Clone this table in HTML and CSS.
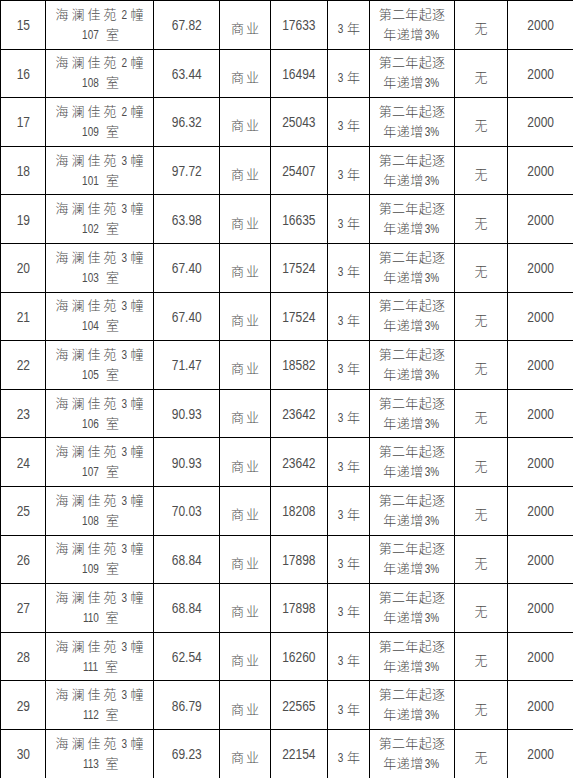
FILE: index.html
```html
<!DOCTYPE html>
<html lang="zh">
<head>
<meta charset="utf-8">
<title>房屋租赁一览</title>
<link rel="stylesheet" href="styles.css">
</head>
<body>
<table class="grid">
<colgroup>
<col class="c-no"><col class="c-name"><col class="c-area"><col class="c-use"><col class="c-rent"><col class="c-term"><col class="c-rise"><col class="c-none"><col class="c-dep">
</colgroup>
<tbody>
<tr><td class="num"><span class="n">15</span></td><td class="name"><div class="l1">海澜佳苑<span class="d">2</span>幢</div><div class="l2"><span class="d">107</span>室</div></td><td class="num"><span class="n">67.82</span></td><td class="cjk use">商业</td><td class="num"><span class="n">17633</span></td><td class="term"><span class="d">3</span>年</td><td class="rise"><div class="r1">第二年起逐</div><div class="r2">年递增<span class="d">3%</span></div></td><td class="cjk">无</td><td class="num"><span class="n">2000</span></td></tr>
<tr><td class="num"><span class="n">16</span></td><td class="name"><div class="l1">海澜佳苑<span class="d">2</span>幢</div><div class="l2"><span class="d">108</span>室</div></td><td class="num"><span class="n">63.44</span></td><td class="cjk use">商业</td><td class="num"><span class="n">16494</span></td><td class="term"><span class="d">3</span>年</td><td class="rise"><div class="r1">第二年起逐</div><div class="r2">年递增<span class="d">3%</span></div></td><td class="cjk">无</td><td class="num"><span class="n">2000</span></td></tr>
<tr><td class="num"><span class="n">17</span></td><td class="name"><div class="l1">海澜佳苑<span class="d">2</span>幢</div><div class="l2"><span class="d">109</span>室</div></td><td class="num"><span class="n">96.32</span></td><td class="cjk use">商业</td><td class="num"><span class="n">25043</span></td><td class="term"><span class="d">3</span>年</td><td class="rise"><div class="r1">第二年起逐</div><div class="r2">年递增<span class="d">3%</span></div></td><td class="cjk">无</td><td class="num"><span class="n">2000</span></td></tr>
<tr><td class="num"><span class="n">18</span></td><td class="name"><div class="l1">海澜佳苑<span class="d">3</span>幢</div><div class="l2"><span class="d">101</span>室</div></td><td class="num"><span class="n">97.72</span></td><td class="cjk use">商业</td><td class="num"><span class="n">25407</span></td><td class="term"><span class="d">3</span>年</td><td class="rise"><div class="r1">第二年起逐</div><div class="r2">年递增<span class="d">3%</span></div></td><td class="cjk">无</td><td class="num"><span class="n">2000</span></td></tr>
<tr><td class="num"><span class="n">19</span></td><td class="name"><div class="l1">海澜佳苑<span class="d">3</span>幢</div><div class="l2"><span class="d">102</span>室</div></td><td class="num"><span class="n">63.98</span></td><td class="cjk use">商业</td><td class="num"><span class="n">16635</span></td><td class="term"><span class="d">3</span>年</td><td class="rise"><div class="r1">第二年起逐</div><div class="r2">年递增<span class="d">3%</span></div></td><td class="cjk">无</td><td class="num"><span class="n">2000</span></td></tr>
<tr><td class="num"><span class="n">20</span></td><td class="name"><div class="l1">海澜佳苑<span class="d">3</span>幢</div><div class="l2"><span class="d">103</span>室</div></td><td class="num"><span class="n">67.40</span></td><td class="cjk use">商业</td><td class="num"><span class="n">17524</span></td><td class="term"><span class="d">3</span>年</td><td class="rise"><div class="r1">第二年起逐</div><div class="r2">年递增<span class="d">3%</span></div></td><td class="cjk">无</td><td class="num"><span class="n">2000</span></td></tr>
<tr><td class="num"><span class="n">21</span></td><td class="name"><div class="l1">海澜佳苑<span class="d">3</span>幢</div><div class="l2"><span class="d">104</span>室</div></td><td class="num"><span class="n">67.40</span></td><td class="cjk use">商业</td><td class="num"><span class="n">17524</span></td><td class="term"><span class="d">3</span>年</td><td class="rise"><div class="r1">第二年起逐</div><div class="r2">年递增<span class="d">3%</span></div></td><td class="cjk">无</td><td class="num"><span class="n">2000</span></td></tr>
<tr><td class="num"><span class="n">22</span></td><td class="name"><div class="l1">海澜佳苑<span class="d">3</span>幢</div><div class="l2"><span class="d">105</span>室</div></td><td class="num"><span class="n">71.47</span></td><td class="cjk use">商业</td><td class="num"><span class="n">18582</span></td><td class="term"><span class="d">3</span>年</td><td class="rise"><div class="r1">第二年起逐</div><div class="r2">年递增<span class="d">3%</span></div></td><td class="cjk">无</td><td class="num"><span class="n">2000</span></td></tr>
<tr><td class="num"><span class="n">23</span></td><td class="name"><div class="l1">海澜佳苑<span class="d">3</span>幢</div><div class="l2"><span class="d">106</span>室</div></td><td class="num"><span class="n">90.93</span></td><td class="cjk use">商业</td><td class="num"><span class="n">23642</span></td><td class="term"><span class="d">3</span>年</td><td class="rise"><div class="r1">第二年起逐</div><div class="r2">年递增<span class="d">3%</span></div></td><td class="cjk">无</td><td class="num"><span class="n">2000</span></td></tr>
<tr><td class="num"><span class="n">24</span></td><td class="name"><div class="l1">海澜佳苑<span class="d">3</span>幢</div><div class="l2"><span class="d">107</span>室</div></td><td class="num"><span class="n">90.93</span></td><td class="cjk use">商业</td><td class="num"><span class="n">23642</span></td><td class="term"><span class="d">3</span>年</td><td class="rise"><div class="r1">第二年起逐</div><div class="r2">年递增<span class="d">3%</span></div></td><td class="cjk">无</td><td class="num"><span class="n">2000</span></td></tr>
<tr><td class="num"><span class="n">25</span></td><td class="name"><div class="l1">海澜佳苑<span class="d">3</span>幢</div><div class="l2"><span class="d">108</span>室</div></td><td class="num"><span class="n">70.03</span></td><td class="cjk use">商业</td><td class="num"><span class="n">18208</span></td><td class="term"><span class="d">3</span>年</td><td class="rise"><div class="r1">第二年起逐</div><div class="r2">年递增<span class="d">3%</span></div></td><td class="cjk">无</td><td class="num"><span class="n">2000</span></td></tr>
<tr><td class="num"><span class="n">26</span></td><td class="name"><div class="l1">海澜佳苑<span class="d">3</span>幢</div><div class="l2"><span class="d">109</span>室</div></td><td class="num"><span class="n">68.84</span></td><td class="cjk use">商业</td><td class="num"><span class="n">17898</span></td><td class="term"><span class="d">3</span>年</td><td class="rise"><div class="r1">第二年起逐</div><div class="r2">年递增<span class="d">3%</span></div></td><td class="cjk">无</td><td class="num"><span class="n">2000</span></td></tr>
<tr><td class="num"><span class="n">27</span></td><td class="name"><div class="l1">海澜佳苑<span class="d">3</span>幢</div><div class="l2"><span class="d">110</span>室</div></td><td class="num"><span class="n">68.84</span></td><td class="cjk use">商业</td><td class="num"><span class="n">17898</span></td><td class="term"><span class="d">3</span>年</td><td class="rise"><div class="r1">第二年起逐</div><div class="r2">年递增<span class="d">3%</span></div></td><td class="cjk">无</td><td class="num"><span class="n">2000</span></td></tr>
<tr><td class="num"><span class="n">28</span></td><td class="name"><div class="l1">海澜佳苑<span class="d">3</span>幢</div><div class="l2"><span class="d">111</span>室</div></td><td class="num"><span class="n">62.54</span></td><td class="cjk use">商业</td><td class="num"><span class="n">16260</span></td><td class="term"><span class="d">3</span>年</td><td class="rise"><div class="r1">第二年起逐</div><div class="r2">年递增<span class="d">3%</span></div></td><td class="cjk">无</td><td class="num"><span class="n">2000</span></td></tr>
<tr><td class="num"><span class="n">29</span></td><td class="name"><div class="l1">海澜佳苑<span class="d">3</span>幢</div><div class="l2"><span class="d">112</span>室</div></td><td class="num"><span class="n">86.79</span></td><td class="cjk use">商业</td><td class="num"><span class="n">22565</span></td><td class="term"><span class="d">3</span>年</td><td class="rise"><div class="r1">第二年起逐</div><div class="r2">年递增<span class="d">3%</span></div></td><td class="cjk">无</td><td class="num"><span class="n">2000</span></td></tr>
<tr><td class="num"><span class="n">30</span></td><td class="name"><div class="l1">海澜佳苑<span class="d">3</span>幢</div><div class="l2"><span class="d">113</span>室</div></td><td class="num"><span class="n">69.23</span></td><td class="cjk use">商业</td><td class="num"><span class="n">22154</span></td><td class="term"><span class="d">3</span>年</td><td class="rise"><div class="r1">第二年起逐</div><div class="r2">年递增<span class="d">3%</span></div></td><td class="cjk">无</td><td class="num"><span class="n">2000</span></td></tr>
</tbody>
</table>
</body>
</html>
```

FILE: styles.css
```css
html, body {
  margin: 0;
  padding: 0;
  overflow: hidden;
  background: #ffffff;
}

.grid {
  border-collapse: collapse;
  table-layout: fixed;
  width: 574px;
  font-family: "Liberation Sans", "Noto Sans CJK SC", sans-serif;
  font-weight: 300;
  color: #4d4d4d;
}

.c-no { width: 45px; }
.c-name { width: 108px; }
.c-area { width: 66px; }
.c-use { width: 51px; }
.c-rent { width: 57px; }
.c-term { width: 42px; }
.c-rise { width: 85px; }
.c-none { width: 53px; }
.c-dep { width: 67px; }

.grid tr {
  height: 48.6px;
}

.grid td {
  border: 1px solid #000000;
  padding: 0;
  text-align: center;
  vertical-align: middle;
  white-space: nowrap;
}

/* condensed digits */
.n, .d {
  display: inline-block;
  transform: scaleX(0.8);
  letter-spacing: 0;
}

.num {
  font-size: 15px;
  padding-bottom: 1px;
}

.d {
  font-size: 12.5px;
}

.l1 .d {
  margin: 0 3px 0 -2px;
}

.l2 .d {
  margin-right: 5px;
}

.r2 .d {
  margin-left: -1px;
}

.term .d {
  margin-right: 3px;
}

.cjk {
  font-size: 13px;
  padding-top: 6px !important;
}

.use {
  letter-spacing: 2px;
  text-indent: 2px;
}

.term {
  font-size: 13px;
  padding-top: 6px !important;
}

.name, .rise {
  font-size: 13px;
  line-height: 20px;
}

.l1 {
  letter-spacing: 3px;
  text-indent: 3px;
}

.r1 {
  letter-spacing: 0.3px;
}

.r2 {
  letter-spacing: 0.5px;
}
```
